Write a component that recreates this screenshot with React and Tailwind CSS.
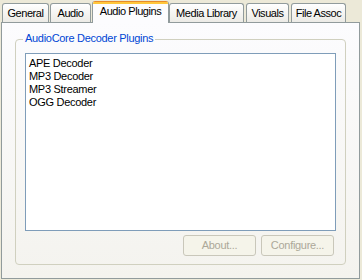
export default function App() {
  const tabs = [
    { label: "General", w: "w-[47px]", ml: "ml-[2px]" },
    { label: "Audio", w: "w-[41px]", ml: "ml-[1px]" },
    { label: "Audio Plugins", w: "w-[77px]", ml: "ml-[1px]", active: true },
    { label: "Media Library", w: "w-[75px]", ml: "ml-0" },
    { label: "Visuals", w: "w-[43px]", ml: "ml-[2px]" },
    { label: "File Assoc", w: "w-[55px]", ml: "ml-[2px]" },
  ];
  const items = ["APE Decoder", "MP3 Decoder", "MP3 Streamer", "OGG Decoder"];
  return (
    <div
      className="w-[362px] h-[280px] bg-[#ece9d8] overflow-hidden text-[11px] text-black tracking-[-0.3px]"
      style={{ fontFamily: '"Liberation Sans", Arial, sans-serif' }}
    >
      <div className="flex items-end h-[22px] tracking-[-0.45px]">
        {tabs.map((t) =>
          t.active ? (
            <div
              key={t.label}
              className={`${t.w} ${t.ml} h-[22px] relative z-10 -mb-px flex flex-col rounded-t-[3px] border-x border-[#919b9c] bg-[#fcfcfe] overflow-hidden`}
            >
              <div className="h-px bg-[#e68b2c]" />
              <div className="h-[2px] bg-[#ffc73c]" />
              <div className="flex-1 flex items-start justify-center pt-[1px] leading-[13px] whitespace-nowrap">
                {t.label}
              </div>
            </div>
          ) : (
            <div
              key={t.label}
              className={`${t.w} ${t.ml} h-[19px] flex items-start justify-center pt-[3px] leading-[13px] whitespace-nowrap rounded-t-[3px] border-x border-t border-[#919b9c] bg-gradient-to-b from-[#ffffff] to-[#ecebe6]`}
            >
              {t.label}
            </div>
          )
        )}
      </div>
      <div className="ml-[1px] w-[359px] h-[257px] border border-[#919b9c] bg-gradient-to-b from-[#fcfcfe] to-[#f4f3ee] pl-[13px] pt-[16px]">
        <div className="relative w-[331px] h-[226px] border border-[#d0d0bf] rounded-[4px] pt-[13px] pl-[9px] flex flex-col">
          <span className="absolute left-[7px] top-[-8px] px-[2px] leading-[13px] text-[#0046d5] bg-[#fbfbfc]">
            AudioCore Decoder Plugins
          </span>
          <div className="w-[311px] h-[178px] border border-[#7f9db9] bg-white pt-[3px] pl-[3px]">
            {items.map((i) => (
              <div key={i} className="leading-[13px] h-[13px]">
                {i}
              </div>
            ))}
          </div>
          <div className="flex gap-[5px] mt-[4px] ml-[158px]">
            <div className="w-[73px] h-[21px] border border-[#c9c7ba] rounded-[3px] bg-[#f5f4ea] text-[#aca899] flex items-center justify-center leading-[13px]">
              About...
            </div>
            <div className="w-[73px] h-[21px] border border-[#c9c7ba] rounded-[3px] bg-[#f5f4ea] text-[#aca899] flex items-center justify-center leading-[13px]">
              Configure...
            </div>
          </div>
        </div>
      </div>
    </div>
  );
}
